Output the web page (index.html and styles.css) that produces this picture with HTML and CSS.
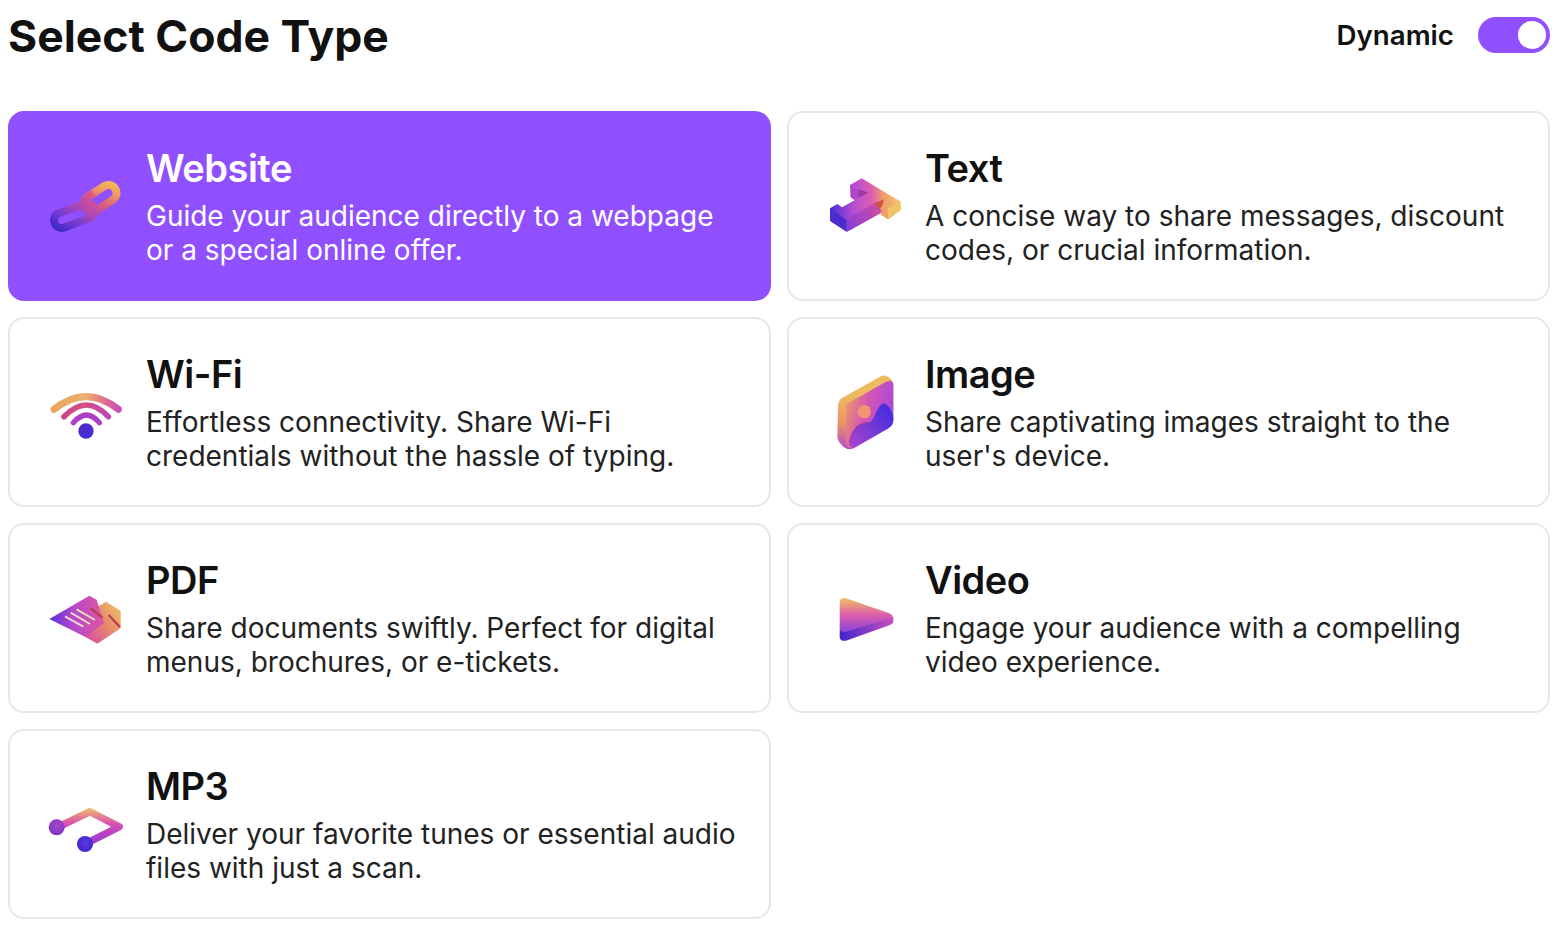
FILE: index.html
```html
<!DOCTYPE html>
<html>
    <head>
        <meta charset="UTF-8">
        <meta name="viewport" content="width=device-width,initial-scale=1">
        <title>Select Code Type</title>
        <link rel="stylesheet" href="styles.css">
    </head>
    <body>
        <div class="page-container">
            <div class="header">
                <h1>Select Code Type</h1>
                <div class="dynamic">
                    <span class="dynamic-label">Dynamic</span>
                    <span class="toggle"><span class="knob"></span></span>
                </div>
            </div>
            <div class="types">
                <div class="card selected">
                    <svg class="icon" viewBox="48 18 240 240">
                        <defs>
                            <linearGradient id="linkGrad" gradientUnits="userSpaceOnUse" x1="80" y1="200" x2="255" y2="70">
                                <stop offset="0" stop-color="#3f28c8"/>
                                <stop offset="0.25" stop-color="#7f3fd0"/>
                                <stop offset="0.5" stop-color="#c04aa8"/>
                                <stop offset="0.65" stop-color="#dc5a80"/>
                                <stop offset="0.85" stop-color="#f0a060"/>
                                <stop offset="1" stop-color="#f5bd55"/>
                            </linearGradient>
                        </defs>
                        <rect x="158" y="91" width="106" height="48" rx="24" transform="rotate(-33 211 115)" fill="none" stroke="url(#linkGrad)" stroke-width="24"/>
                        <rect x="70" y="144" width="126" height="46" rx="23" transform="rotate(-20 133 167)" fill="none" stroke="url(#linkGrad)" stroke-width="24"/>
                        <path d="M165 152 C158 125 172 110 190 98" fill="none" stroke="url(#linkGrad)" stroke-width="22"/>
                    </svg>
                    <div class="card-text">
                        <h2>Website</h2>
                        <p>Guide your audience directly to a webpage or a special online offer.</p>
                    </div>
                </div>
                <div class="card">
                    <svg class="icon" viewBox="45 18 240 240">
                        <defs>
                            <linearGradient id="textGrad" gradientUnits="userSpaceOnUse" x1="60" y1="150" x2="270" y2="150">
                                <stop offset="0" stop-color="#4b2fd4"/>
                                <stop offset="0.35" stop-color="#b84ed0"/>
                                <stop offset="0.6" stop-color="#dd5fb0"/>
                                <stop offset="0.75" stop-color="#ee9a70"/>
                                <stop offset="1" stop-color="#f3c766"/>
                            </linearGradient>
                            <linearGradient id="textFront" gradientUnits="userSpaceOnUse" x1="110" y1="190" x2="215" y2="140">
                                <stop offset="0" stop-color="#8a3fd6"/>
                                <stop offset="1" stop-color="#d24c9f"/>
                            </linearGradient>
                        </defs>
                        <path d="M120 75 L155 55 L272 125 L272 150 L235 178 L214 165 L214 158 L130 205 L110 215 L60 182 L60 145 L82 132 L96 142 L135 120 L122 112 Z" fill="url(#textGrad)"/>
                        <path d="M110 180 L110 215 L60 182 L60 145 Z" fill="#4a2ccf"/>
                        <path d="M110 178 L205 122 L214 158 L130 205 L110 215 Z" fill="url(#textFront)"/>
                        <path d="M232 146 L272 125 L272 150 L235 178 Z" fill="#f2c468"/>
                        <path d="M214 130 L232 146 L235 178 L214 165 Z" fill="#ef9f63"/>
                        <path d="M196 130 L222 118 L214 142 L206 146 Z" fill="#d4503f"/>
                        <path d="M122 78 L145 90 L145 110 L135 120 L122 112 Z" fill="#b146c4"/>
                        <path d="M145 88 L176 98 L150 112 L145 106 Z" fill="#9a3aa8"/>
                    </svg>
                    <div class="card-text">
                        <h2>Text</h2>
                        <p>A concise way to share messages, discount codes, or crucial information.</p>
                    </div>
                </div>
                <div class="card">
                    <svg class="icon" viewBox="48 6 240 240">
                        <defs>
                            <linearGradient id="wifiOuter" gradientUnits="userSpaceOnUse" x1="70" y1="0" x2="268" y2="0">
                                <stop offset="0" stop-color="#eca55f"/>
                                <stop offset="0.5" stop-color="#ecb06e"/>
                                <stop offset="0.8" stop-color="#df6b90"/>
                                <stop offset="1" stop-color="#c94fbe"/>
                            </linearGradient>
                            <linearGradient id="wifiMid" gradientUnits="userSpaceOnUse" x1="100" y1="0" x2="238" y2="0">
                                <stop offset="0" stop-color="#c9497f"/>
                                <stop offset="0.5" stop-color="#d34f86"/>
                                <stop offset="1" stop-color="#bd45b6"/>
                            </linearGradient>
                        </defs>
                        <path d="M72 118 Q168 42 265 118" fill="none" stroke="url(#wifiOuter)" stroke-width="21" stroke-linecap="round"/>
                        <path d="M102 140 Q170 70 235 140" fill="none" stroke="url(#wifiMid)" stroke-width="17" stroke-linecap="round"/>
                        <path d="M130 158 Q170 112 208 158" fill="none" stroke="#ac3fc4" stroke-width="16" stroke-linecap="round"/>
                        <circle cx="168" cy="183" r="23" fill="#4a2bcf"/>
                    </svg>
                    <div class="card-text">
                        <h2>Wi-Fi</h2>
                        <p>Effortless connectivity. Share Wi-Fi credentials without the hassle of typing.</p>
                    </div>
                </div>
                <div class="card">
                    <svg class="icon" viewBox="45 21 240 240">
                        <defs>
                            <linearGradient id="imageSide" gradientUnits="userSpaceOnUse" x1="130" y1="90" x2="120" y2="250">
                                <stop offset="0" stop-color="#ecbb60"/>
                                <stop offset="0.55" stop-color="#ea9368"/>
                                <stop offset="1" stop-color="#b94ec4"/>
                            </linearGradient>
                            <linearGradient id="imageFace" gradientUnits="userSpaceOnUse" x1="100" y1="110" x2="250" y2="150">
                                <stop offset="0" stop-color="#eda160"/>
                                <stop offset="0.45" stop-color="#d455b4"/>
                                <stop offset="1" stop-color="#a848dc"/>
                            </linearGradient>
                            <linearGradient id="imageHill" gradientUnits="userSpaceOnUse" x1="120" y1="240" x2="245" y2="150">
                                <stop offset="0" stop-color="#a844cc"/>
                                <stop offset="1" stop-color="#4a2ede"/>
                            </linearGradient>
                        </defs>
                        <path d="M95 100 L215 32 Q240 30 250 55 L250 165 Q250 180 235 190 L130 250 Q110 258 95 240 Q80 225 82 210 L84 125 Q84 108 95 100 Z" fill="url(#imageSide)"/>
                        <path d="M108 118 L228 50 Q250 42 250 62 L250 165 Q250 180 235 190 L130 250 Q110 252 108 235 Z" fill="url(#imageFace)"/>
                        <path d="M118 232 C132 180 155 172 182 172 C200 148 206 112 225 116 C240 122 250 145 250 165 Q250 180 235 190 L130 250 Q118 248 118 232 Z" fill="url(#imageHill)"/>
                        <path d="M118 232 C132 180 155 172 182 172" fill="none" stroke="#9a3aa8" stroke-width="4"/>
                        <circle cx="163" cy="140" r="20" fill="#f29573"/>
                    </svg>
                    <div class="card-text">
                        <h2>Image</h2>
                        <p>Share captivating images straight to the user's device.</p>
                    </div>
                </div>
                <div class="card">
                    <svg class="icon" viewBox="48 9 240 240">
                        <defs>
                            <linearGradient id="pdfFront" gradientUnits="userSpaceOnUse" x1="58" y1="132" x2="225" y2="130">
                                <stop offset="0" stop-color="#5230d8"/>
                                <stop offset="0.4" stop-color="#b047cf"/>
                                <stop offset="1" stop-color="#e2589a"/>
                            </linearGradient>
                            <linearGradient id="pdfBack" gradientUnits="userSpaceOnUse" x1="170" y1="190" x2="272" y2="110">
                                <stop offset="0" stop-color="#d94fa8"/>
                                <stop offset="0.5" stop-color="#e6836f"/>
                                <stop offset="1" stop-color="#efb866"/>
                            </linearGradient>
                        </defs>
                        <path d="M165 185 L202 206 L272 160 L272 108 L228 80 L195 100 Z" fill="url(#pdfBack)"/>
                        <path d="M58 132 L178 62 L200 74 L222 145 L165 185 Z" fill="url(#pdfFront)"/>
                        <path d="M182 100 L218 128 M236 120 L270 156" fill="none" stroke="#b83a4e" stroke-width="6"/>
                        <path d="M105 124 L160 155 M122 113 L180 147 M140 103 L195 135" fill="none" stroke="#f0d8c8" stroke-width="6"/>
                    </svg>
                    <div class="card-text">
                        <h2>PDF</h2>
                        <p>Share documents swiftly. Perfect for digital menus, brochures, or e-tickets.</p>
                    </div>
                </div>
                <div class="card">
                    <svg class="icon" viewBox="45 9 240 240">
                        <defs>
                            <linearGradient id="videoTop" gradientUnits="userSpaceOnUse" x1="0" y1="70" x2="0" y2="170">
                                <stop offset="0" stop-color="#efc062"/>
                                <stop offset="0.5" stop-color="#db5eaa"/>
                                <stop offset="1" stop-color="#8c42dc"/>
                            </linearGradient>
                            <linearGradient id="videoSide" gradientUnits="userSpaceOnUse" x1="90" y1="0" x2="250" y2="0">
                                <stop offset="0" stop-color="#3f26ca"/>
                                <stop offset="1" stop-color="#c94ec0"/>
                            </linearGradient>
                        </defs>
                        <path d="M89 165 L250 125 L250 140 Q250 146 240 150 L108 197 Q90 200 89 185 Z" fill="url(#videoSide)"/>
                        <path d="M89 82 Q90 66 108 70 L238 115 Q252 122 246 128 L110 170 Q90 174 89 160 Z" fill="url(#videoTop)"/>
                    </svg>
                    <div class="card-text">
                        <h2>Video</h2>
                        <p>Engage your audience with a compelling video experience.</p>
                    </div>
                </div>
                <div class="card">
                    <svg class="icon" viewBox="48 -3 240 240">
                        <defs>
                            <linearGradient id="noteGrad" gradientUnits="userSpaceOnUse" x1="0" y1="68" x2="0" y2="190">
                                <stop offset="0" stop-color="#efbf68"/>
                                <stop offset="0.4" stop-color="#d94fb0"/>
                                <stop offset="0.8" stop-color="#a03cd2"/>
                            </linearGradient>
                            <radialGradient id="noteBallLeft" cx="0.55" cy="0.4" r="0.6">
                                <stop offset="0" stop-color="#a845c8"/>
                                <stop offset="1" stop-color="#7c34c6"/>
                            </radialGradient>
                            <radialGradient id="noteBallRight" cx="0.55" cy="0.4" r="0.6">
                                <stop offset="0" stop-color="#5a38e0"/>
                                <stop offset="1" stop-color="#3f26c8"/>
                            </radialGradient>
                        </defs>
                        <path d="M82 127 L180 80 L268 125 L165 177" fill="none" stroke="url(#noteGrad)" stroke-width="22" stroke-linejoin="round"/>
                        <circle cx="80" cy="127" r="24" fill="url(#noteBallLeft)"/>
                        <circle cx="165" cy="177" r="24" fill="url(#noteBallRight)"/>
                    </svg>
                    <div class="card-text">
                        <h2>MP3</h2>
                        <p>Deliver your favorite tunes or essential audio files with just a scan.</p>
                    </div>
                </div>
            </div>
        </div>
    </body>
</html>
```

FILE: styles.css
```css
*, *::before, *::after {
    box-sizing: border-box;
    font-family: "Inter", "Liberation Sans", sans-serif;
}
html, body {
    margin: 0;
    padding: 0;
    background-color: #fff;
}
.page-container {
    padding: 0 6px 0 8px;
    color: #111;
}
.header {
    display: flex;
    justify-content: space-between;
    align-items: center;
    height: 72px;
    margin-bottom: 39px;
}
h1 {
    margin: 0;
    font-size: 44.5px;
    font-weight: 700;
}
.dynamic {
    display: flex;
    align-items: center;
    gap: 24px;
    margin-bottom: 2px;
}
.dynamic-label {
    font-size: 27.7px;
    font-weight: 600;
}
.toggle {
    display: flex;
    justify-content: flex-end;
    align-items: center;
    width: 72px;
    height: 36px;
    padding-right: 4px;
    border-radius: 18px;
    background-color: #9150ff;
}
.knob {
    width: 28px;
    height: 28px;
    border-radius: 50%;
    background-color: #fff;
}
.types {
    display: grid;
    grid-template-columns: 1fr 1fr;
    gap: 16px;
}
.card {
    display: flex;
    align-items: center;
    gap: 20px;
    height: 190px;
    padding: 0 26px 0 36px;
    border: 2px solid #e5e7eb;
    border-radius: 16px;
}
.card.selected {
    border-color: #9150ff;
    background-color: #9150ff;
    color: #fff;
}
.icon {
    flex: none;
    width: 80px;
    height: 80px;
    filter: blur(0.5px);
}
.card-text h2 {
    margin: 0 0 8px 0;
    font-size: 38px;
    line-height: 46px;
    font-weight: 600;
    letter-spacing: -0.5px;
}
.card-text p {
    margin: 0;
    font-size: 28px;
    line-height: 34px;
    font-weight: 400;
    color: #222;
}
.card.selected p {
    color: #fff;
}
```
